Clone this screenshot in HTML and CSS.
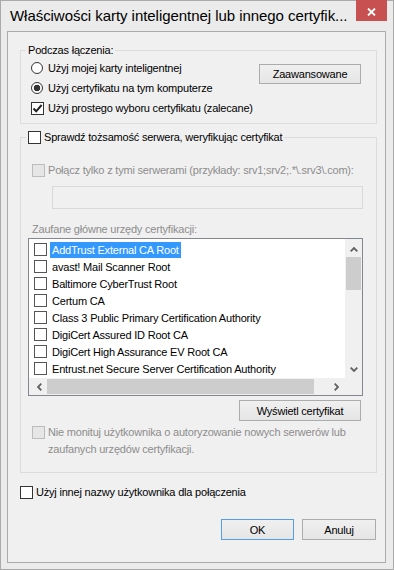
FILE: index.html
```html
<!doctype html>
<html lang="pl">
<head>
    <meta charset="UTF-8">
    <title>Właściwości karty inteligentnej</title>
    <link rel="stylesheet" href="styles.css">
</head>
<body>
<div class="window">
    <!-- pasek tytułu -->
    <div class="titlebar">
        <span class="title">Właściwości karty inteligentnej lub innego certyfik...</span>
        <span class="close">
            <svg width="9" height="8" viewBox="0 0 9 8"><path d="M1 0.5 L8 7.5 M8 0.5 L1 7.5" stroke="#fff" stroke-width="1.8"/></svg>
        </span>
    </div>
    <div class="client">
        <!-- Podczas łączenia -->
        <fieldset class="group group-connect">
            <legend>Podczas łączenia:</legend>
            <div class="connect-body">
                <div class="options">
                    <div class="opt"><span class="radio"></span>Użyj mojej karty inteligentnej</div>
                    <div class="opt"><span class="radio on"></span>Użyj certyfikatu na tym komputerze</div>
                    <div class="opt opt-check">
                        <span class="box">
                            <svg width="11" height="11" viewBox="0 0 11 11"><path d="M1.5 5.5 L4.2 8.3 L9.6 2" fill="none" stroke="#222" stroke-width="2"/></svg>
                        </span>Użyj prostego wyboru certyfikatu (zalecane)
                    </div>
                </div>
                <button class="btn btn-adv">Zaawansowane</button>
            </div>
        </fieldset>
        <!-- Sprawdź tożsamość serwera -->
        <fieldset class="group group-verify">
            <legend><span class="box"></span>Sprawdź tożsamość serwera, weryfikując certyfikat</legend>
            <div class="verify-body">
                <div class="opt disabled servers"><span class="box off"></span>Połącz tylko z tymi serwerami (przykłady: srv1;srv2;.*\.srv3\.com):</div>
                <div class="field"></div>
                <div class="caption">Zaufane główne urzędy certyfikacji:</div>
                <div class="listbox">
                    <div class="items">
                        <div class="item"><span class="box"></span><span class="name sel">AddTrust External CA Root</span></div>
                        <div class="item"><span class="box"></span><span class="name">avast! Mail Scanner Root</span></div>
                        <div class="item"><span class="box"></span><span class="name">Baltimore CyberTrust Root</span></div>
                        <div class="item"><span class="box"></span><span class="name">Certum CA</span></div>
                        <div class="item"><span class="box"></span><span class="name">Class 3 Public Primary Certification Authority</span></div>
                        <div class="item"><span class="box"></span><span class="name">DigiCert Assured ID Root CA</span></div>
                        <div class="item"><span class="box"></span><span class="name">DigiCert High Assurance EV Root CA</span></div>
                        <div class="item"><span class="box"></span><span class="name">Entrust.net Secure Server Certification Authority</span></div>
                    </div>
                    <div class="vscroll">
                        <span class="arrow arrow-up">
                            <svg width="8" height="5" viewBox="0 0 8 5"><path d="M0.7 4.3 L4 1 L7.3 4.3" fill="none" stroke="#606060" stroke-width="1.8"/></svg>
                        </span>
                        <span class="thumb thumb-v"></span>
                        <span class="arrow arrow-down">
                            <svg width="8" height="5" viewBox="0 0 8 5"><path d="M0.7 0.7 L4 4 L7.3 0.7" fill="none" stroke="#606060" stroke-width="1.8"/></svg>
                        </span>
                    </div>
                    <div class="hscroll">
                        <span class="arrow arrow-left">
                            <svg width="5" height="8" viewBox="0 0 5 8"><path d="M4.3 0.7 L1 4 L4.3 7.3" fill="none" stroke="#606060" stroke-width="1.8"/></svg>
                        </span>
                        <span class="thumb thumb-h"></span>
                        <span class="arrow arrow-right">
                            <svg width="5" height="8" viewBox="0 0 5 8"><path d="M0.7 0.7 L4 4 L0.7 7.3" fill="none" stroke="#606060" stroke-width="1.8"/></svg>
                        </span>
                    </div>
                    <div class="corner"></div>
                </div>
                <button class="btn btn-view">Wyświetl certyfikat</button>
                <div class="opt disabled prompt"><span class="box off"></span><span>Nie monituj użytkownika o autoryzowanie nowych serwerów lub<br>zaufanych urzędów certyfikacji.</span></div>
            </div>
        </fieldset>
        <div class="opt user-opt"><span class="box"></span>Użyj innej nazwy użytkownika dla połączenia</div>
        <!-- przyciski -->
        <div class="actions">
            <button class="btn btn-default">OK</button>
            <button class="btn">Anuluj</button>
        </div>
    </div>
</div>
</body>
</html>
```
FILE: styles.css
```css
* {
    box-sizing: border-box;
}

body {
    margin: 0;
    font-family: "Liberation Sans", Arial, sans-serif;
    font-size: 11px;
    letter-spacing: -0.2px;
    color: #000;
}

.window {
    width: 394px;
    height: 570px;
    border: 1px solid #aaaaaa;
    background: #ebebeb;
    display: flex;
    flex-direction: column;
}

.titlebar {
    height: 30px;
    display: flex;
    align-items: flex-start;
}

.title {
    flex: 1;
    padding: 6px 0 0 9px;
    font-size: 15px;
    line-height: 18px;
    letter-spacing: -0.05px;
    white-space: nowrap;
}

.close {
    width: 31px;
    height: 21px;
    margin: -1px 6px 0 0;
    padding-top: 2px;
    background: #c75050;
    display: flex;
    align-items: center;
    justify-content: center;
}

.close svg {
    display: block;
}

.client {
    flex: 1;
    margin: 0 7px 6px 6px;
    border: 1px solid #ababab;
    background: #f0f0f0;
}

/* ramki grup */
.group {
    border: 1px solid #dcdcdc;
    margin: 0 8px 0 12px;
    padding: 0;
    min-width: 0;
}

.group legend {
    margin-left: 5px;
    padding: 0 2px;
    line-height: 16px;
    display: flex;
    align-items: center;
}

.group-connect {
    margin-top: 10px;
}

.group-verify {
    margin-top: 5px;
}

.connect-body {
    display: flex;
    padding: 0 15px 5px 10px;
}

.options {
    display: flex;
    flex-direction: column;
}

.opt {
    height: 20px;
    display: flex;
    align-items: center;
    white-space: nowrap;
}

/* przełączniki i pola wyboru */
.radio {
    width: 12px;
    height: 12px;
    margin-right: 5px;
    border: 1px solid #333;
    border-radius: 50%;
    background: #fff;
}

.radio.on {
    background: radial-gradient(circle, #333 0, #333 3px, #fff 3.6px);
}

.box {
    width: 13px;
    height: 13px;
    flex: none;
    margin-right: 3px;
    border: 1px solid #333;
    background: #fff;
    display: flex;
    align-items: center;
    justify-content: center;
}

.box svg {
    display: block;
}

.opt-check .box {
    margin-right: 4px;
}

.box.off {
    border-color: #bcbcbc;
    background: #e6e6e6;
}

.disabled,
.caption {
    color: #8d8d8d;
}

.verify-body {
    display: flex;
    flex-direction: column;
    padding: 0 13px 14px 0;
}

.servers {
    margin: 15px 0 0 11px;
}

.field {
    height: 23px;
    margin: 6px 0 0 31px;
    border: 1px solid #d9d9d9;
    background: #f0f0f0;
}

.caption {
    margin: 12px 0 1px 11px;
    line-height: 16px;
}

/* lista certyfikatów */
.listbox {
    height: 158px;
    margin-left: 7px;
    border: 1px solid #828790;
    background: #f0f0f0;
    display: grid;
    grid-template-columns: 1fr 17px;
    grid-template-rows: 1fr 17px;
}

.items {
    background: #fff;
    padding-top: 2px;
    overflow: hidden;
}

.item {
    height: 17px;
    padding-left: 5px;
    display: flex;
    align-items: center;
    white-space: nowrap;
}

.item .box {
    margin-right: 3px;
    border-color: #555;
}

.item .name {
    padding: 0 2px;
    line-height: 16px;
}

.item .sel {
    background: #3399ff;
    color: #fff;
}

.vscroll {
    display: flex;
    flex-direction: column;
    align-items: center;
}

.hscroll {
    display: flex;
    align-items: center;
}

.arrow {
    width: 17px;
    height: 17px;
    flex: none;
    display: flex;
    align-items: center;
    justify-content: center;
}

.arrow svg {
    display: block;
}

.arrow-up {
    padding-top: 3px;
}

.arrow-left {
    padding-left: 4px;
}

.arrow-down {
    margin-top: auto;
}

.thumb {
    background: #cdcdcd;
}

.thumb-v {
    width: 15px;
    height: 33px;
    margin-top: 1px;
}

.thumb-h {
    width: 267px;
    height: 15px;
    margin-left: 1px;
}

.arrow-right {
    margin-left: auto;
}

/* przyciski */
.btn {
    height: 21px;
    padding: 0;
    border: 1px solid #acacac;
    background: linear-gradient(#f0f0f0, #e5e5e5);
    font: inherit;
    letter-spacing: inherit;
    color: #000;
}

.btn-adv {
    width: 102px;
    height: 20px;
    margin: 6px 0 0 auto;
}

.btn-view {
    width: 122px;
    margin: 4px 2px 0 auto;
}

.prompt {
    height: auto;
    margin: 3px 0 0 11px;
    align-items: flex-start;
    line-height: 17px;
}

.prompt .box {
    margin-top: 2px;
}

.user-opt {
    margin: 9px 0 0 12px;
}

.actions {
    display: flex;
    justify-content: flex-end;
    gap: 8px;
    margin: 17px 9px 0 0;
}

.actions .btn {
    width: 74px;
}

.actions .btn-default {
    width: 73px;
    border-color: #569de5;
}
```
